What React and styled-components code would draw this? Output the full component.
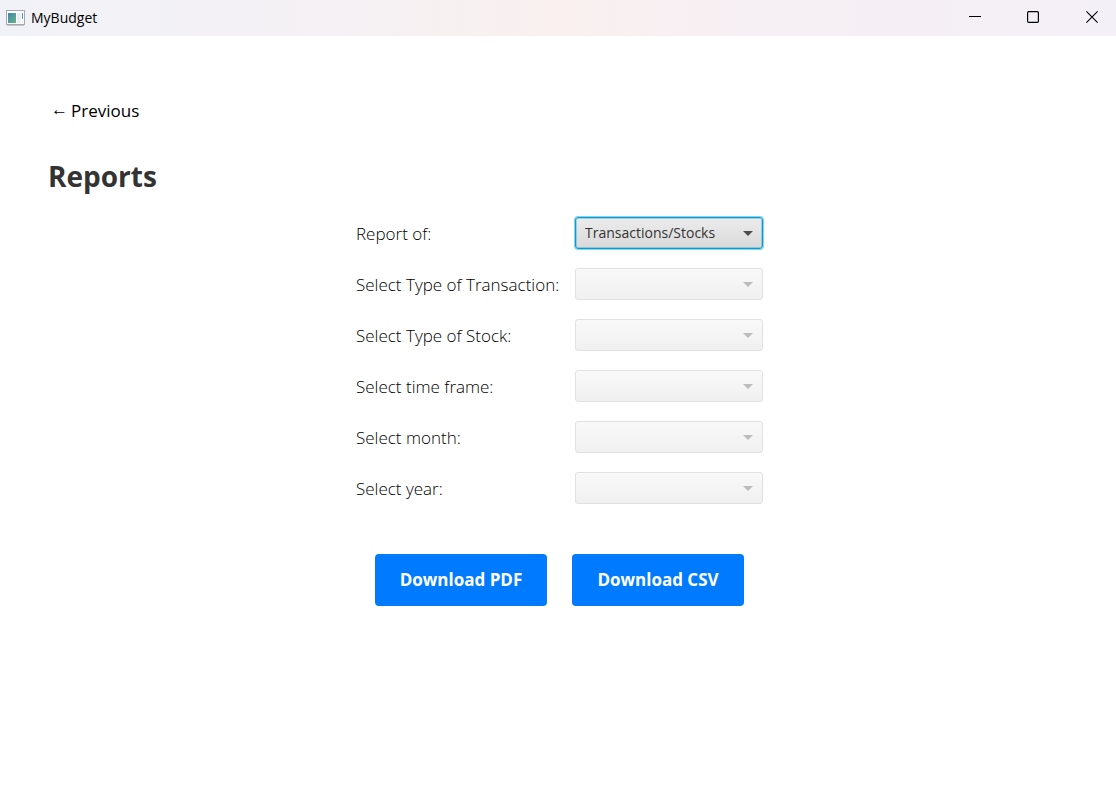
import React, { useState } from "react";
import styled, { createGlobalStyle } from "styled-components";

const GlobalStyle = createGlobalStyle`
  *, *::before, *::after { box-sizing: border-box; }
  body {
    margin: 0;
    background: #ffffff;
    color: #333333;
    font-family: "Open Sans", "Noto Sans", sans-serif;
    font-size: 17px;
  }
`;

const Window = styled.div`
  display: flex;
  flex-direction: column;
  min-height: 100vh;
`;

const TitleBar = styled.header`
  display: flex;
  align-items: center;
  height: 36px;
  padding-left: 6px;
  background: linear-gradient(90deg, #f1f2f7 0%, #f3f1f6 20%, #f9f0ef 50%, #f6eff4 70%, #f4f0f7 100%);
`;

const AppIcon = styled.svg`
  flex: none;
  margin-right: 6px;
`;

const AppName = styled.span`
  flex: 1;
  color: #000000;
  font-size: 14px;
  line-height: 20px;
`;

const WindowButton = styled.button`
  display: flex;
  align-items: center;
  justify-content: center;
  width: 58px;
  height: 34px;
  padding: 0;
  border: 0;
  background: transparent;
`;

const WindowControls = styled.div`
  display: flex;
  margin-right: -5px;
`;

const Page = styled.main`
  flex: 1;
  padding: 59px 45px 48px 48px;
`;

const BackButton = styled.button`
  display: flex;
  align-items: center;
  gap: 3px;
  height: 30px;
  padding: 0 3px;
  border: 0;
  background: transparent;
  color: #000000;
  font: inherit;
`;

const Arrow = styled.span`
  font-family: "Liberation Serif", serif;
  font-size: 17px;
  line-height: 20px;
`;

const Heading = styled.h1`
  margin: 31px 0 21px;
  font-size: 28px;
  font-weight: 700;
  line-height: 40px;
`;

const Form = styled.form`
  display: flex;
  flex-direction: column;
  align-items: center;
  gap: 50px;
`;

const Fields = styled.div`
  display: grid;
  grid-template-columns: 219px 188px;
  row-gap: 19px;
`;

const Label = styled.label`
  padding-top: 1px;
  color: #000000;
  font-weight: 300;
  line-height: 31px;
  white-space: nowrap;
`;

const ComboBox = styled.div`
  display: grid;
  align-items: center;

  &::after {
    content: "";
    grid-area: 1 / 1;
    justify-self: end;
    margin-right: 10px;
    border: 5px solid transparent;
    border-top-color: ${(p) => (p.$disabled ? "#bcbcbc" : "#4d4d4d")};
    border-bottom: 0;
    pointer-events: none;
  }
`;

const Select = styled.select`
  grid-area: 1 / 1;
  width: 100%;
  height: 32px;
  padding: 0 28px 2px 9px;
  appearance: none;
  outline: none;
  border: 1px solid #c4c4c4;
  border-radius: 3px;
  background: linear-gradient(#ececec, #d9d9d9);
  color: #333333;
  font: inherit;
  font-size: 14px;

  &:focus {
    border-color: #039ed3;
    box-shadow: 0 0 0 1px #8dd2ea, inset 0 0 0 1px #039ed355;
  }

  &:disabled {
    border-color: #e1e1e1;
    background: linear-gradient(#f9f9f9, #f0f0f0);
    opacity: 1;
  }
`;

const Actions = styled.div`
  display: flex;
  gap: 25px;
`;

const DownloadButton = styled.button`
  width: 172px;
  height: 52px;
  padding: 0 0 2px;
  border: 0;
  border-radius: 4px;
  background: #007bff;
  color: #ffffff;
  font: inherit;
  font-weight: 700;
`;

const fields = [
  { id: "report", label: "Report of:", options: ["Transactions/Stocks", "Transactions", "Stocks"] },
  { id: "transaction", label: "Select Type of Transaction:" },
  { id: "stock", label: "Select Type of Stock:" },
  { id: "timeframe", label: "Select time frame:" },
  { id: "month", label: "Select month:" },
  { id: "year", label: "Select year:" },
];

function Field({ id, label, options }) {
  const [value, setValue] = useState(options ? options[0] : "");
  const disabled = !options;
  return (
    <>
      <Label htmlFor={id}>{label}</Label>
      <ComboBox $disabled={disabled}>
        <Select
          id={id}
          value={value}
          disabled={disabled}
          autoFocus={!disabled}
          onChange={(e) => setValue(e.target.value)}
        >
          {(options || [""]).map((o) => (
            <option key={o} value={o}>{o}</option>
          ))}
        </Select>
      </ComboBox>
    </>
  );
}

export default function App() {
  return (
    <Window>
      <GlobalStyle />
      <TitleBar>
        <AppIcon width="19" height="16" viewBox="0 0 19 16" aria-hidden="true">
          <defs>
            <linearGradient id="screen" x1="0" y1="0" x2="1" y2="1">
              <stop offset="0" stopColor="#4584b6" />
              <stop offset="1" stopColor="#62b77d" />
            </linearGradient>
          </defs>
          <rect x="0.5" y="0.5" width="18" height="14" fill="#fbfbfb" stroke="#a5a8ad" />
          <path d="M1 15.5H18" stroke="#c4c6ca" />
          <rect x="2" y="3" width="8" height="10" fill="url(#screen)" />
          <rect x="11" y="3" width="4" height="10" fill="#eceef0" />
          <rect x="16" y="3" width="1" height="6" fill="#5493b8" />
        </AppIcon>
        <AppName>MyBudget</AppName>
        <WindowControls>
          <WindowButton aria-label="Minimize">
            <svg width="14" height="12" viewBox="0 0 14 12"><path d="M0 4.5H12" stroke="#000" /></svg>
          </WindowButton>
          <WindowButton aria-label="Maximize">
            <svg width="14" height="14" viewBox="0 0 14 14">
              <rect x="0.6" y="0.6" width="10.8" height="10.8" rx="1.2" fill="none" stroke="#000" strokeWidth="1.2" />
            </svg>
          </WindowButton>
          <WindowButton aria-label="Close">
            <svg width="12" height="14" viewBox="0 0 12 14">
              <path d="M0.4 0.4L11.6 11.6M11.6 0.4L0.4 11.6" stroke="#000" strokeWidth="1.1" />
            </svg>
          </WindowButton>
        </WindowControls>
      </TitleBar>
      <Page>
        <BackButton type="button">
          <Arrow>←</Arrow>
          Previous
        </BackButton>
        <Heading>Reports</Heading>
        <Form onSubmit={(e) => e.preventDefault()}>
          <Fields>
            {fields.map((f) => <Field key={f.id} {...f} />)}
          </Fields>
          <Actions>
            <DownloadButton type="button">Download PDF</DownloadButton>
            <DownloadButton type="button">Download CSV</DownloadButton>
          </Actions>
        </Form>
      </Page>
    </Window>
  );
}
